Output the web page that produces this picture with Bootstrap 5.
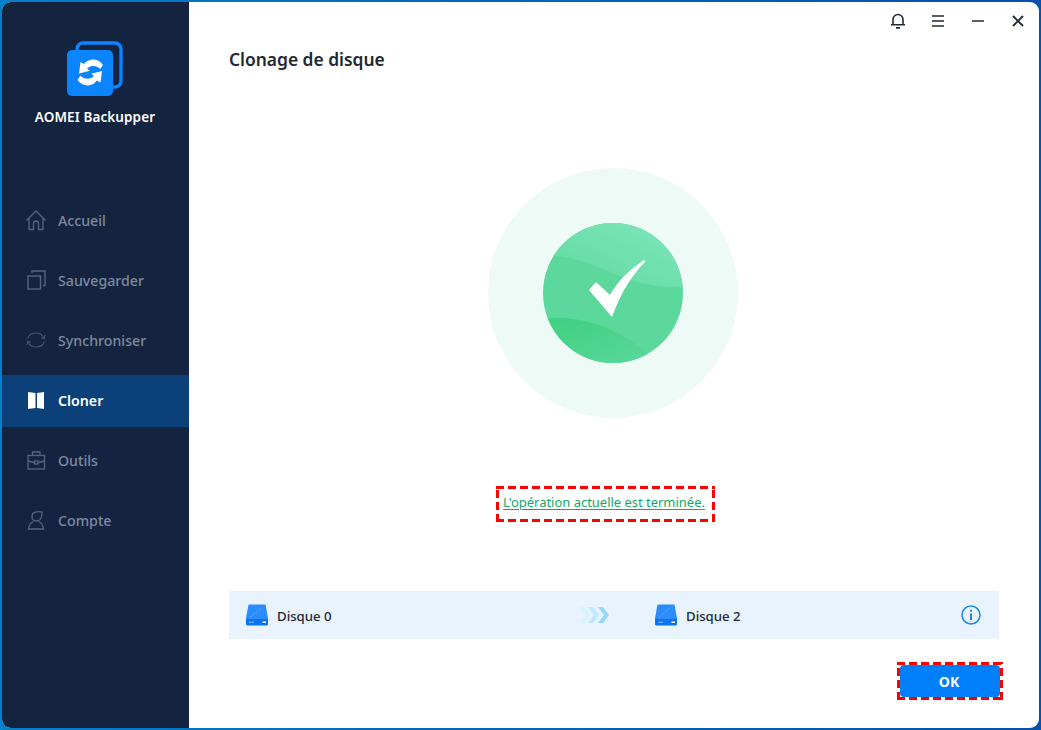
<!DOCTYPE html>
<html lang="fr">
<head>
<meta charset="utf-8">
<title>AOMEI Backupper</title>
<link href="https://cdn.jsdelivr.net/npm/bootstrap@5.3.0/dist/css/bootstrap.min.css" rel="stylesheet">
<style>
html,body{margin:0;height:100%;overflow:hidden;background:#fff}
body{font-family:"Noto Sans","Open Sans",sans-serif;font-size:14px;color:#1f2733}
.frame-win{width:1041px;height:730px;padding:2px;background:linear-gradient(90deg,#0680cc 0%,#0468b8 40%,#0650ac 100%)}
.win-in{height:100%;border-radius:9px;overflow:hidden;background:#fff}
.side{width:187px;flex:none;background:#14233f}
.brand{height:193px;padding-top:38px;padding-right:1px}
.brand-name{font-size:13.500px;font-weight:600;color:#fff;margin-top:9px;letter-spacing:.1px;line-height:20px}
.side-item{height:52px;margin-bottom:8px;padding-left:23px;color:#7d8a9f;font-size:14.200px;font-weight:500;gap:11px;padding-top:1px;padding-bottom:1px}
.side-item svg{width:22px;height:22px;flex:none;margin-bottom:2px}
.side-item.on{background:#0b4079;color:#fff;font-weight:600}
.main-pane{min-width:0;padding:0 40px}
.top-tools{height:38px;margin-right:-39px}
.tool-b{width:40px;height:38px}
.page-h{font-size:17.400px;font-weight:600;color:#1f2733;margin:7px 0 0;line-height:24px}
.halo{width:250px;height:250px;border-radius:50%;background:#eefaf5;margin-top:97px;margin-right:2px}
.dash-frame{padding:3px;background:
 repeating-linear-gradient(90deg,#f00 0 8px,transparent 8px 12px) top/100% 3px no-repeat,
 repeating-linear-gradient(90deg,#f00 0 8px,transparent 8px 12px) bottom/100% 3px no-repeat,
 repeating-linear-gradient(0deg,#f00 0 8px,transparent 8px 12px) left/3px 100% no-repeat,
 repeating-linear-gradient(0deg,#f00 0 8px,transparent 8px 12px) right/3px 100% no-repeat}
.result-box{margin-top:68px;margin-right:18px;height:36px;width:219px;white-space:nowrap;line-height:24px;padding-top:4px;padding-right:5px}
.result-box a{color:#12a86b;font-size:13px;text-decoration-thickness:1px;text-underline-offset:2px;letter-spacing:-.02px}
.disk-bar{height:48px;background:#e8f3fe;margin-top:69px;padding:0 18px 0 17px}
.disk-n{font-size:13.200px;color:#1f2733;font-weight:500;margin-left:9px;padding-top:3px}
.disk-l{width:332px}
.arrows{width:77px}
.ok-wrap{margin-top:23px;margin-right:-4px;width:106px;height:38px}
.ok-btn{background:#007ffb;color:#fff;border:0;border-radius:4px;width:100px;height:32px;font-size:14px;font-weight:700;padding:0 2px 0 0}
</style>
</head>
<body>
<div class="frame-win">
<div class="win-in d-flex">
  <aside class="side d-flex flex-column">
    <div class="brand d-flex flex-column align-items-center">
      <svg width="58" height="58" viewBox="0 0 58 58">
        <rect x="11" y="3" width="44" height="44" rx="6" fill="none" stroke="#0a84ff" stroke-width="3.400"/>
        <rect x="1" y="10" width="46" height="46" rx="5" fill="#0a84ff"/>
        <g fill="#fff">
          <path d="M37 25c-3-4.200-7.500-6-12-5.200-3.200.6-5.400 2.200-7 4.200l-3.500-2-1.500 11.500 11-2.700-2.900-2c1-1.400 3-2.500 5.400-2.700 3-.2 5.800.8 7.700 2.900z"/>
          <path d="M11.500 40c3 4.200 7.500 6 12 5.200 3.400-.6 5.800-2.400 7.500-4.600l3.500 2 1.500-11.700-11 2.900 2.900 2c-1 1.400-3 2.700-5.600 2.900-3.200.2-6-.8-8-3z"/>
        </g>
      </svg>
      <div class="brand-name">AOMEI Backupper</div>
    </div>
    <div class="side-item d-flex align-items-center">
      <svg viewBox="0 0 22 22" fill="none" stroke="#56657e" stroke-width="1.300"><path d="M1.500 11.500 11 2l9.500 9.500M4 9.500V20.500h4.500v-6q0-2.500 2.500-2.500t2.500 2.500v6H18V9.500"/></svg>
      <span>Accueil</span>
    </div>
    <div class="side-item d-flex align-items-center">
      <svg viewBox="0 0 22 22" fill="none" stroke="#56657e" stroke-width="1.400"><rect x="3" y="7" width="12.500" height="13"/><path d="M7 4V2h13v14.500h-2"/></svg>
      <span>Sauvegarder</span>
    </div>
    <div class="side-item d-flex align-items-center">
      <svg viewBox="0 0 22 22" fill="none" stroke="#47566f" stroke-width="1.100"><path d="M2.500 9.500C4 5.500 7.500 4 11 4c3.500 0 6.500 2 8 5M19.500 12.500C18 16.500 14.500 18 11 18c-3.500 0-6.500-2-8-5"/><path d="M16 9l3.300.500.7-3.500M6 13l-3.300-.500-.7 3.500"/></svg>
      <span>Synchroniser</span>
    </div>
    <div class="side-item on d-flex align-items-center">
      <svg viewBox="0 0 22 22" fill="#fff"><path d="M3 3l7.500 1v15L3 20zM19 3l-7 1v15l7 1z"/></svg>
      <span>Cloner</span>
    </div>
    <div class="side-item d-flex align-items-center">
      <svg viewBox="0 0 22 22" fill="none" stroke="#56657e" stroke-width="1.300"><rect x="3" y="6.500" width="16.500" height="13.500"/><path d="M7.500 6.500V3h7.500v3.500M3 12l6 1.500M19.500 12l-6 1.500"/><rect x="9.500" y="12" width="3.500" height="3"/></svg>
      <span>Outils</span>
    </div>
    <div class="side-item d-flex align-items-center">
      <svg viewBox="0 0 22 22" fill="none" stroke="#56657e" stroke-width="1.300"><path d="M11 3c3-1 5 0 6 0 0 4-.5 9-5.500 9C8.500 12 7 10 7 7.500 7 5 8.500 3.500 11 3zM8.500 12.500C6 13.500 4 15.500 3.500 20h15c-.5-4.500-2.500-6.500-5-7.500"/></svg>
      <span>Compte</span>
    </div>
  </aside>

  <main class="main-pane flex-grow-1 d-flex flex-column">
    <div class="top-tools d-flex justify-content-end align-items-center">
      <div class="tool-b d-flex align-items-center justify-content-center">
        <svg width="16" height="18" viewBox="0 0 16 18" fill="none" stroke="#222a33" stroke-width="1.600"><path d="M1 12.800h14M3 12.800V7.500a5 5 0 0 1 10 0v5.300"/><path d="M6 15.800h4" stroke-width="1.800"/></svg>
      </div>
      <div class="tool-b d-flex align-items-center justify-content-center">
        <svg width="14" height="14" viewBox="0 0 14 14" stroke="#222a33" stroke-width="1.700"><path d="M1 2h12M1 7h12M1 12h12"/></svg>
      </div>
      <div class="tool-b d-flex align-items-center justify-content-center">
        <svg width="14" height="14" viewBox="0 0 14 14" stroke="#222a33" stroke-width="1.700"><path d="M1 7h12"/></svg>
      </div>
      <div class="tool-b d-flex align-items-center justify-content-center">
        <svg width="14" height="14" viewBox="0 0 14 14" stroke="#222a33" stroke-width="1.900"><path d="M2 2l10 10M12 2L2 12"/></svg>
      </div>
    </div>
    <h1 class="page-h">Clonage de disque</h1>

    <div class="halo align-self-center d-flex align-items-center justify-content-center">
      <svg width="140" height="140" viewBox="0 0 140 140">
        <defs>
          <clipPath id="cc"><circle cx="70" cy="70" r="70"/></clipPath>
          <linearGradient id="g1" x1="1" y1="0" x2="0" y2="1"><stop offset="0" stop-color="#7ee6bd"/><stop offset="1" stop-color="#5fd99f"/></linearGradient>
          <linearGradient id="g2" x1="0" y1="0" x2="1" y2="1"><stop offset="0" stop-color="#3ecf7e"/><stop offset="1" stop-color="#5cd89d"/></linearGradient>
        </defs>
        <g clip-path="url(#cc)">
          <rect width="140" height="140" fill="#5cd89d"/>
          <path d="M0 0H140V63C110 66 85 58 60 46 35 35 15 32 0 32z" fill="url(#g1)"/>
          <path d="M0 96C30 92 60 100 85 116 100 126 110 135 120 140H0z" fill="url(#g2)"/>
        </g>
        <path d="M46 67l7-8 14 13C76 56 88 46 101 37l1.500 1.500C90 51 79 67 69 94z" fill="#fff"/>
      </svg>
    </div>

    <div class="result-box dash-frame align-self-center text-center"><a href="#">L'opération actuelle est terminée.</a></div>

    <div class="disk-bar d-flex align-items-center">
      <div class="disk-l d-flex align-items-center">
        <svg width="22" height="22" viewBox="0 0 22 22"><path d="M2.500 .5h17l2.500 13.500v2H0v-2z" fill="#2b8dfb"/><path d="M4 13.500L16 3" stroke="#6db4ff" stroke-width="1" stroke-dasharray="1 1"/><path d="M0 15h22v5a1.500 1.500 0 0 1-1.500 1.500h-19A1.500 1.500 0 0 1 0 20z" fill="#0a73f0"/><path d="M16.500 17.500h3.500v1.500h-3.500z" fill="#fff"/><path d="M3 17.500h5v1.500H3z" fill="#5badff"/></svg>
        <span class="disk-n">Disque 0</span>
      </div>
      <div class="arrows d-flex justify-content-start">
        <svg width="32" height="18" viewBox="0 0 32 18"><path d="M1 1h5l6 8-6 8H1l6-8z" fill="#d6f3ff"/><path d="M10 1h5l6 8-6 8h-5l6-8z" fill="#bdeaff"/><path d="M20 1h5l6 8-6 8h-5l6-8z" fill="#93d8ff"/></svg>
      </div>
      <div class="d-flex align-items-center flex-grow-1">
        <svg width="22" height="22" viewBox="0 0 22 22"><path d="M2.500 .5h17l2.500 13.500v2H0v-2z" fill="#2b8dfb"/><path d="M4 13.500L16 3" stroke="#6db4ff" stroke-width="1" stroke-dasharray="1 1"/><path d="M0 15h22v5a1.500 1.500 0 0 1-1.500 1.500h-19A1.500 1.500 0 0 1 0 20z" fill="#0a73f0"/><path d="M16.500 17.500h3.500v1.500h-3.500z" fill="#fff"/><path d="M3 17.500h5v1.500H3z" fill="#5badff"/></svg>
        <span class="disk-n">Disque 2</span>
      </div>
      <svg width="20" height="20" viewBox="0 0 20 20" fill="none" stroke="#1c86f2" stroke-width="1.500"><circle cx="10" cy="10" r="9"/><path d="M10 8.500v6.500" stroke-width="2"/><path d="M10 4.800v2" stroke-width="2"/></svg>
    </div>

    <div class="ok-wrap dash-frame align-self-end">
      <button type="button" class="btn ok-btn d-block">OK</button>
    </div>
  </main>
</div>
</div>
</body>
</html>
